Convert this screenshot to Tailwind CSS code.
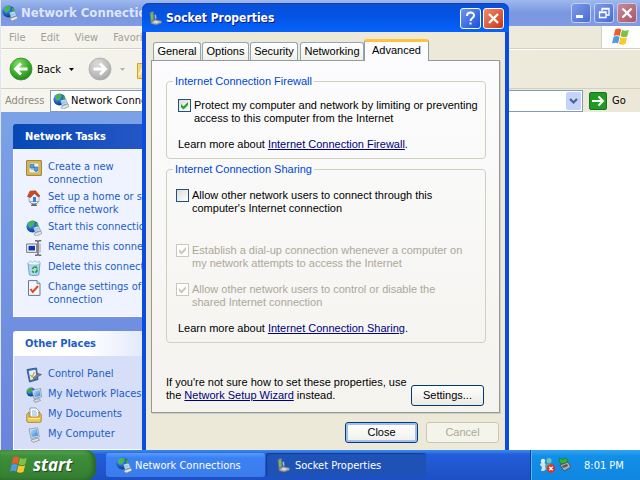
<!DOCTYPE html>
<html lang="en">
<head>
<meta charset="utf-8">
<title>Network Connections</title>
<script src="https://cdn.jsdelivr.net/npm/@tailwindcss/browser@4"></script>
</head>
<body class="h-screen overflow-hidden relative flex flex-col bg-white text-[11px] leading-[13px] text-black font-['DejaVu_Sans_Condensed','Liberation_Sans',sans-serif] cursor-default">

<svg class="absolute size-0" aria-hidden="true">
  <defs>
    <radialGradient id="gGlobe" cx=".35" cy=".3" r=".8"><stop offset="0" stop-color="#7cc4f5"/><stop offset=".5" stop-color="#1d63c8"/><stop offset="1" stop-color="#0b2c7c"/></radialGradient>
    <radialGradient id="gBack" cx=".4" cy=".3" r=".8"><stop offset="0" stop-color="#8fe06a"/><stop offset=".5" stop-color="#3fb22f"/><stop offset="1" stop-color="#1c7d1a"/></radialGradient>
    <radialGradient id="gFwd" cx=".4" cy=".3" r=".8"><stop offset="0" stop-color="#dcdcdc"/><stop offset=".6" stop-color="#bdbdbd"/><stop offset="1" stop-color="#a2a2a2"/></radialGradient>
    <linearGradient id="gScreen" x1="0" y1="0" x2="1" y2="1"><stop offset="0" stop-color="#b9e6fb"/><stop offset="1" stop-color="#2f7fdc"/></linearGradient>
  </defs>
  <symbol id="i-net" viewBox="0 0 16 16">
    <circle cx="6.500" cy="6.500" r="6" fill="url(#gGlobe)"/>
    <path d="M3 3 5.500 1 9 1.500 8 4 6 5 5 7.500 3 7z" fill="#45bb33"/><path d="M9.500 3.500l2-.5.8 3-1.800.5z" fill="#3fb02f"/>
    <path d="M7.500 7.500 12.500 6l2 4.500-5.500 2z" fill="#e8f3fb" stroke="#6a7f96" stroke-width=".7"/>
    <path d="m8.300 8.300 3.700-1.100 1.300 2.900-4 1.400z" fill="#8fd0f5"/>
    <path d="m9 13 6-2 1 2.500L10.500 16 8 14.800z" fill="#dfe3e6" stroke="#7b8288" stroke-width=".6"/>
  </symbol>
  <symbol id="i-socket" viewBox="0 0 16 16">
    <path d="M2 2.500 5.500 1.500 6 10 3 12z" fill="#8f9498" stroke="#6c7074" stroke-width=".7"/>
    <path d="M2.800 4.500 4.800 4l.2 4.500-1.800.5z" fill="#4fd83b"/>
    <path d="M6.500 5 8 4.500l.5 4L7 9z" fill="#b7bbbd"/>
    <path d="m3 12 4-2.500 6.500 1.500v2L8 15l-5-1.500z" fill="#a9adb0" stroke="#6c7074" stroke-width=".7"/>
    <path d="m5 12.200 2.500-1.400 4 .9-3 1.500z" fill="#dadcdd"/>
  </symbol>
  <symbol id="i-new" viewBox="0 0 16 16">
    <path d="M.7.700h14.600v14.600H.7z" fill="#e3c766" stroke="#94701b"/>
    <path d="M3 3h10v10H3z" fill="#f4efd8" stroke="#b08f32" stroke-width=".7"/>
    <path d="M4 4.500h4v3.500H4zM8 7h4v3.500H8z" fill="#4aa3e8" stroke="#2868b5" stroke-width=".6"/>
    <path d="M5 9h2M9 11.500h2.500" stroke="#6f8fa8"/>
  </symbol>
  <symbol id="i-home" viewBox="0 0 16 16">
    <path d="M3 6 8 3l5 3v5.500H3z" fill="#e6eef8" stroke="#8294ab" stroke-width=".7"/>
    <path d="M1.500 6.500 4 1.200 9.500.8 14 6l-2 .8L8.500 3.200 4.500 7.500z" fill="#d4481f" stroke="#98300f" stroke-width=".6"/>
    <path d="M7 7h3v5H7z" fill="#3382d6"/>
    <path d="M4 11.500c0 2.500 8 2.500 8 0l.5 1-2.500 1.800V15H6v-.8L3.500 12.500z" fill="#6f7a89"/>
    <path d="M5 15.300h6" stroke="#3f4752"/>
  </symbol>
  <symbol id="i-rename" viewBox="0 0 16 16">
    <path d="M.7 4h10v8.300H.7z" fill="#fff" stroke="#6d6d78"/>
    <path d="M2.500 5.800h6.500v4.700H2.500z" fill="#0b36ac"/>
    <path d="M9 .8h2l1 .8 1-.8h2.300M12 2v12M9 15.200h2l1-.9 1 .9h2.300" fill="none" stroke="#6a6a76" stroke-width="1.500"/>
    <path d="M14 3.500v9" stroke="#9a9aa4"/>
  </symbol>
  <symbol id="i-delete" viewBox="0 0 16 16">
    <path d="M2 3.500h12l-1.200 11.300c-2 1-7.500 1-9.500 0z" fill="#b4d8f2" stroke="#5b90bd" stroke-width=".8"/>
    <path d="m1.500 3.500 3-2.500 2 1.500L9 .8l2 1.500 2.500-.8.8 2-3 1.500H4z" fill="#eff8fe" stroke="#7badd2" stroke-width=".7"/>
    <path d="M6.500 9a2.500 2.500 0 0 1 4-1.500M11 9.500a2.500 2.500 0 0 1-2 2.800M8 12.500a2.500 2.500 0 0 1-1.700-1.700" fill="none" stroke="#1f9c2c" stroke-width="1.500"/>
    <path d="M10 5.800v2.700h2z" fill="#1f9c2c"/>
  </symbol>
  <symbol id="i-settings" viewBox="0 0 16 16">
    <path d="M2.500.6h8.500l3 3v11.800H2.500z" fill="#f2f6fd" stroke="#66788f"/>
    <path d="M11 .6v3h3" fill="#c3d2e8" stroke="#66788f" stroke-width=".8"/>
    <path d="m4.500 9 2.300 3L12 6" fill="none" stroke="#e8451c" stroke-width="2"/>
  </symbol>
  <symbol id="i-control" viewBox="0 0 16 16">
    <path d="M1 2.500 10.500 1l1.500 11.500L3.500 15z" fill="#3d78c8" stroke="#22497f" stroke-width=".8"/>
    <path d="m2.800 4 6.700-1.200 1 8.500-6 1.700z" fill="#e9f4fd"/>
    <path d="m4.500 8 1.700 2L8.500 5" fill="none" stroke="#d8a430" stroke-width="1.300"/>
    <path d="m7 11 5-4.500 3.500 1L12 9.500l-3.500 3z" fill="#7e8794" stroke="#3e4652" stroke-width=".6"/>
  </symbol>
  <symbol id="i-places" viewBox="0 0 16 16">
    <circle cx="5" cy="5" r="4.500" fill="url(#gGlobe)"/>
    <path d="m1.500 3 3-2 2 1-1 2-2 2.500-2-1z" fill="#3fb02f"/>
    <path d="m6 3.500 8.500-2L15.500 10 8 11.500z" fill="#e4ebf2" stroke="#73839a" stroke-width=".7"/>
    <path d="m7.200 4.500 6.500-1.500.8 6-5.800 1.200z" fill="url(#gScreen)"/>
    <path d="m7.500 13 5.500-1.500 1.500 2L9 15.500z" fill="#d4d9df" stroke="#737c88" stroke-width=".6"/>
  </symbol>
  <symbol id="i-docs" viewBox="0 0 16 16">
    <path d="M4 1h6l3 3v8H4z" fill="#fff" stroke="#6f86ad" stroke-width=".8"/>
    <path d="M6 4h4M6 6h5M6 8h5" stroke="#85b0e2"/>
    <path d="M.8 7.500 3 5v5h10V5l2.200 2.500V14c0 .8-.5 1.300-1.200 1.300H2c-.7 0-1.200-.5-1.200-1.300z" fill="#f0cb58" stroke="#a97f1c" stroke-width=".9"/>
    <path d="M2.500 11.500h11" stroke="#fff0b0"/>
  </symbol>
  <symbol id="i-computer" viewBox="0 0 16 16">
    <path d="M3 2 11.500.8l1.800 9L5 11.500z" fill="#dde6f0" stroke="#75859b" stroke-width=".7"/>
    <path d="m4.300 3 6.500-1 1.300 6.800-6.300 1.200z" fill="url(#gScreen)"/>
    <path d="m5 13 7-2 1.500 2.200-6.500 2.200z" fill="#e3e6ea" stroke="#7b8592" stroke-width=".7"/>
  </symbol>
  <symbol id="i-flag" viewBox="0 0 20 20">
    <path d="M4.200 2.500c2-1.300 3.700-1.300 6-.1L8.800 9C6.700 7.800 4.800 8 2.700 9z" fill="#f0592b"/>
    <path d="M11 2.800c2.300 1.300 4.300 1.200 6.800-.1L16.300 9.200c-2.300 1.300-4.500 1.300-6.700.1z" fill="#7dc242"/>
    <path d="M2.500 9.900c2.100-1.100 4-1.200 6.100 0l-1.500 6.600c-2.200-1.200-4-1-6.100.1z" fill="#4a9be8"/>
    <path d="M9.400 10.200c2.200 1.200 4.400 1.200 6.700 0l-1.600 6.500c-2.300 1.300-4.400 1.300-6.600.1z" fill="#fcc72b"/>
  </symbol>
</svg>

<!-- Explorer window -->
<main class="flex-1 min-h-0 flex flex-col border-l border-[#dfe6f6]">
  <header class="h-[26px] shrink-0 flex items-center gap-[3px] pl-px pr-[3px] bg-linear-to-b from-[#9db9ee] via-[#7a96df] to-[#809be2]">
    <svg class="size-4"><use href="#i-net"/></svg>
    <h1 class="flex-1 text-[13px] leading-4 font-bold text-[#dde6fa]">Network Connections</h1>
    <div class="flex gap-[3px]">
      <button aria-label="Minimize" class="size-5 rounded-[3px] border border-[#c3d0f3] bg-linear-to-br from-[#7b9bea] to-[#4a6bd2]"><svg viewBox="0 0 18 18" class="size-[18px]"><path d="M4 11h7v3H4z" fill="#fff"/></svg></button>
      <button aria-label="Restore" class="size-5 rounded-[3px] border border-[#c3d0f3] bg-linear-to-br from-[#7b9bea] to-[#4a6bd2]"><svg viewBox="0 0 18 18" class="size-[18px]"><path d="M7 7V4.500h7V11h-2.500M4.500 8h6.500v5.500H4.500zM4 8.500h7M7 5h7" fill="none" stroke="#fff" stroke-width="1.300"/></svg></button>
      <button aria-label="Close window" class="size-5 rounded-[3px] border border-[#d5c3dc] bg-linear-to-br from-[#c58a9c] to-[#a85768]"><svg viewBox="0 0 18 18" class="size-[18px]"><path d="m4.500 4.500 9 9m0-9-9 9" stroke="#fff" stroke-width="2.200"/></svg></button>
    </div>
  </header>

  <div class="h-[23px] shrink-0 flex border-b border-[#d4d0bd] bg-linear-to-r from-[#f6f5ef] to-[#ebe8d8]">
    <nav aria-label="Menu" class="flex-1 flex items-center gap-[15px] pl-2 text-[#a3a093]">
      <button>File</button><button>Edit</button><button>View</button><button>Favorites</button>
    </nav>
    <div class="w-[39px] flex items-center justify-center bg-white border-l border-[#d4d0bd]"><svg class="size-5"><use href="#i-flag"/></svg></div>
  </div>

  <div class="h-[40px] shrink-0 flex items-center pl-2 border-t border-b border-t-white border-b-[#d4d0bd] bg-linear-to-r from-[#f6f5ef] to-[#ebe8d8]">
    <button class="flex items-center gap-[4px]">
      <svg viewBox="0 0 24 24" class="size-6"><circle cx="12" cy="12" r="11" fill="url(#gBack)" stroke="#3a8a35" stroke-width=".8"/><path d="M18.500 12H7M12 6.500 6.500 12l5.500 5.500" fill="none" stroke="#fff" stroke-width="2.800"/></svg>
      Back
      <svg viewBox="0 0 5 3" class="w-[5px] h-[3px] ml-1"><path d="M0 0h5L2.500 3z"/></svg>
    </button>
    <button aria-label="Forward" class="flex items-center gap-2 ml-[14px]">
      <svg viewBox="0 0 24 24" class="size-6"><circle cx="12" cy="12" r="11" fill="url(#gFwd)" stroke="#aaa" stroke-width=".8"/><path d="M5.500 12H17M12 6.500l5.500 5.500-5.500 5.500" fill="none" stroke="#fff" stroke-width="2.800"/></svg>
      <svg viewBox="0 0 5 3" class="w-[5px] h-[3px]"><path d="M0 0h5L2.500 3z" fill="#b5b3a8"/></svg>
    </button>
    <svg viewBox="0 0 16 16" class="size-4 ml-3 mt-1"><path d="M.5.500h6l2 2h7v13H.5z" fill="#f7d972" stroke="#d6a124"/><path d="m2 12 4-7 4 7" fill="none" stroke="#fff6cf" stroke-width="2"/></svg>
  </div>

  <div class="h-[23px] shrink-0 flex items-center pl-[4px] bg-linear-to-r from-[#f6f5ef] to-[#ebe8d8]">
    <label for="addr" class="w-[45px] text-[#8d8b7f]">Address</label>
    <div class="flex-1 h-[22px] grid items-center bg-white border border-[#7f9db9]">
      <select id="addr" class="[grid-area:1/1] appearance-none w-full pl-5 bg-transparent outline-none"><option>Network Connections</option></select>
      <svg class="[grid-area:1/1] size-4 ml-[2px] pointer-events-none"><use href="#i-net"/></svg>
      <svg viewBox="0 0 15 18" class="[grid-area:1/1] justify-self-end w-[15px] h-[18px] mr-px rounded-[2px] bg-[#c3d3fb] pointer-events-none"><path d="m4 7 3.500 3.500L11 7" fill="none" stroke="#4d6185" stroke-width="2.200"/></svg>
    </div>
    <button class="w-[57px] flex items-center gap-[5px] pl-[6px]">
      <svg viewBox="0 0 18 18" class="size-[18px]"><rect x=".5" y=".5" width="17" height="17" rx="1.500" fill="#1f9a25" stroke="#17741b"/><path d="M3 9h11M9.500 4.500 14 9l-4.500 4.500" fill="none" stroke="#fff" stroke-width="2"/></svg>
      Go
    </button>
  </div>

  <div class="flex-1 min-h-0 flex bg-white">
    <aside class="w-[210px] pl-3 pr-3 pt-3 flex flex-col gap-[14px] bg-linear-to-b from-[#7ba2e7] to-[#6b84dc] text-[#215dc6]">
      <section>
        <h2 class="h-[25px] flex items-center pl-3 rounded-t-[3px] font-bold text-white bg-linear-to-r from-[#0549b4] to-[#2c5ccc]">Network Tasks</h2>
        <ul class="border border-t-0 border-white bg-[#eff3ff] pl-3 pt-[11px] pb-[10px] flex flex-col gap-1 whitespace-nowrap">
          <li><a href="#" class="flex gap-[6px]"><svg class="size-4 shrink-0"><use href="#i-new"/></svg><span>Create a new<br>connection</span></a></li>
          <li><a href="#" class="flex gap-[6px]"><svg class="size-4 shrink-0"><use href="#i-home"/></svg><span>Set up a home or small<br>office network</span></a></li>
          <li><a href="#" class="flex gap-[6px]"><svg class="size-4 shrink-0"><use href="#i-net"/></svg><span>Start this connection</span></a></li>
          <li><a href="#" class="flex gap-[6px]"><svg class="size-4 shrink-0"><use href="#i-rename"/></svg><span>Rename this connection</span></a></li>
          <li><a href="#" class="flex gap-[6px]"><svg class="size-4 shrink-0"><use href="#i-delete"/></svg><span>Delete this connection</span></a></li>
          <li><a href="#" class="flex gap-[6px]"><svg class="size-4 shrink-0"><use href="#i-settings"/></svg><span>Change settings of this<br>connection</span></a></li>
        </ul>
      </section>
      <section class="flex-1 flex flex-col">
        <h2 class="h-[25px] flex items-center pl-3 rounded-t-[3px] font-bold bg-linear-to-r from-white from-40% to-[#c6d3f7]">Other Places</h2>
        <ul class="flex-1 border border-t-0 border-white bg-[#d6dff7] pl-3 pt-[11px] flex flex-col gap-1 whitespace-nowrap">
          <li><a href="#" class="flex gap-[6px]"><svg class="size-4 shrink-0"><use href="#i-control"/></svg><span>Control Panel</span></a></li>
          <li><a href="#" class="flex gap-[6px]"><svg class="size-4 shrink-0"><use href="#i-places"/></svg><span>My Network Places</span></a></li>
          <li><a href="#" class="flex gap-[6px]"><svg class="size-4 shrink-0"><use href="#i-docs"/></svg><span>My Documents</span></a></li>
          <li><a href="#" class="flex gap-[6px]"><svg class="size-4 shrink-0"><use href="#i-computer"/></svg><span>My Computer</span></a></li>
        </ul>
      </section>
    </aside>
  </div>
</main>

<!-- Properties dialog -->
<div role="dialog" aria-labelledby="dlg" class="absolute left-[142px] top-[3px] w-[367px] rounded-t-[7px] border-x-4 border-[#0a4be0] bg-[#ece9d8] font-['Liberation_Sans',sans-serif]">
  <header class="h-[29px] -mx-1 pl-[6px] pr-[5px] flex items-center gap-[2px] rounded-t-[7px] bg-linear-to-b from-[#0a4fd8] via-[#0355e6] to-[#0663fb] border-t border-[#1941a5]">
    <svg class="size-4"><use href="#i-socket"/></svg>
    <h2 id="dlg" class="flex-1 text-[12px] leading-4 font-bold text-white font-['DejaVu_Sans_Condensed',sans-serif] text-shadow-[1px_1px_0_#0a1883]">Socket Properties</h2>
    <div class="flex gap-[2px]">
      <button aria-label="Help" class="size-[21px] rounded-[3px] border border-white bg-linear-to-br from-[#6a94f5] to-[#1f4fd3] grid place-items-center"><svg viewBox="0 0 19 19" class="size-[19px]"><path d="M6 7c0-4.500 7-4.500 7-.5 0 2.500-3.500 2.500-3.500 5.500" fill="none" stroke="#fff" stroke-width="2"/><path d="M8.500 13.500h2v2h-2z" fill="#fff"/></svg></button>
      <button aria-label="Close dialog" class="size-[21px] rounded-[3px] border border-white bg-linear-to-br from-[#f0896a] to-[#c8330b] grid place-items-center"><svg viewBox="0 0 19 19" class="size-[19px]"><path d="m5 5 9 9m0-9-9 9" stroke="#fff" stroke-width="2.300"/></svg></button>
    </div>
  </header>

  <div class="px-[5px] pt-[7px]">
    <div role="tablist" class="h-[21px] pl-[2px] flex items-end">
      <button role="tab" class="h-[18px] w-12 mr-px rounded-t-[3px] border border-b-0 border-[#91a7b4] bg-linear-to-b from-white to-[#f0f0ea]">General</button>
      <button role="tab" class="h-[18px] w-[47px] mr-px rounded-t-[3px] border border-b-0 border-[#91a7b4] bg-linear-to-b from-white to-[#f0f0ea]">Options</button>
      <button role="tab" class="h-[18px] w-12 mr-[2px] rounded-t-[3px] border border-b-0 border-[#91a7b4] bg-linear-to-b from-white to-[#f0f0ea]">Security</button>
      <button role="tab" class="h-[18px] w-16 rounded-t-[3px] border border-b-0 border-[#91a7b4] bg-linear-to-b from-white to-[#f0f0ea]">Networking</button>
      <button role="tab" aria-selected="true" class="relative z-10 h-[22px] w-[65px] -mb-px pb-[3px] rounded-t-[3px] border-x border-x-[#919b9c] border-t-[3px] border-t-[#ffc23c] bg-[#fcfcfe]">Advanced</button>
    </div>
    <div role="tabpanel" class="border border-[#919b9c] pl-[14px] pr-[13px] pb-[6px] pt-5 bg-linear-to-b from-[#fcfcfe] to-[#f4f3ee] shadow-[1px_1px_0_#d0cebf]">
      <section class="border border-[#d0d0bf] rounded-[4px] pl-[11px] pb-[7px] whitespace-nowrap">
        <h3 class="-mt-[7px] -ml-[5px] w-max px-[2px] bg-[#fbfbfc] text-[#0046d5]">Internet Connection Firewall</h3>
        <label class="mt-[11px] flex gap-[3px]">
          <span class="grid shrink-0 size-[13px]"><input type="checkbox" checked class="peer [grid-area:1/1] appearance-none size-[13px] border border-[#1c5180] bg-linear-to-br from-[#dcdcd7] to-white"><svg viewBox="0 0 13 13" class="[grid-area:1/1] size-[13px] pointer-events-none invisible peer-checked:visible"><path d="M3 5v3l2.500 2.500L10 6V3L5.500 7.500z" fill="#21a121"/></svg></span>
          <span>Protect my computer and network by limiting or preventing<br>access to this computer from the Internet</span>
        </label>
        <p class="mt-[13px]">Learn more about <a href="#" class="underline text-[#000080]">Internet Connection Firewall</a>.</p>
      </section>
      <section class="mt-[10px] border border-[#d0d0bf] rounded-[4px] pl-[9px] pb-[7px] whitespace-nowrap">
        <h3 class="-mt-[7px] -ml-[3px] w-max px-[2px] bg-[#f9f9f8] text-[#0046d5]">Internet Connection Sharing</h3>
        <label class="mt-[13px] flex gap-[3px]">
          <span class="grid shrink-0 size-[13px]"><input type="checkbox" class="appearance-none size-[13px] border border-[#1c5180] bg-linear-to-br from-[#dcdcd7] to-white"></span>
          <span>Allow other network users to connect through this<br>computer's Internet connection</span>
        </label>
        <label class="mt-[29px] flex gap-[3px] text-[#aca899]">
          <span class="grid shrink-0 size-[13px]"><input type="checkbox" checked disabled class="[grid-area:1/1] appearance-none size-[13px] border border-[#cac8bb] bg-white"><svg viewBox="0 0 13 13" class="[grid-area:1/1] size-[13px]"><path d="M3 5v3l2.500 2.500L10 6V3L5.500 7.500z" fill="#cac8bb"/></svg></span>
          <span>Establish a dial-up connection whenever a computer on<br>my network attempts to access the Internet</span>
        </label>
        <label class="mt-[13px] flex gap-[3px] text-[#aca899]">
          <span class="grid shrink-0 size-[13px]"><input type="checkbox" checked disabled class="[grid-area:1/1] appearance-none size-[13px] border border-[#cac8bb] bg-white"><svg viewBox="0 0 13 13" class="[grid-area:1/1] size-[13px]"><path d="M3 5v3l2.500 2.500L10 6V3L5.500 7.500z" fill="#cac8bb"/></svg></span>
          <span>Allow other network users to control or disable the<br>shared Internet connection</span>
        </label>
        <p class="mt-[13px] pl-[2px]">Learn more about <a href="#" class="underline text-[#000080]">Internet Connection Sharing</a>.</p>
      </section>
      <div class="mt-[33px] flex items-end justify-between pr-[2px]">
        <p class="pb-1">If you're not sure how to set these properties, use<br>the <a href="#" class="underline text-[#000080]">Network Setup Wizard</a> instead.</p>
        <button class="w-[73px] h-[21px] rounded-[3px] border border-[#003c74] bg-linear-to-b from-white to-[#ebeae3]">Settings...</button>
      </div>
    </div>
    <div class="flex justify-end gap-2 pt-[9px] pr-px pb-[10px]">
      <button class="w-[73px] h-[21px] rounded-[3px] border border-[#003c74] bg-linear-to-b from-white to-[#f0f0ea] shadow-[inset_0_0_0_2px_#a5bdf0]">Close</button>
      <button disabled class="w-[73px] h-[21px] rounded-[3px] border border-[#c9c7ba] bg-[#f5f4ea] text-[#aca899]">Cancel</button>
    </div>
  </div>
</div>

<!-- Taskbar -->
<footer class="relative z-20 h-[30px] shrink-0 flex items-stretch text-white bg-linear-to-b from-[#3c8cf0] via-[#245edb] via-15% to-[#1d4fc4]">
  <button class="w-24 flex items-center gap-1 pl-[9px] rounded-r-[10px] bg-linear-to-b from-[#5eac56] via-[#3c8f3b] via-20% to-[#357e33] shadow-[inset_-3px_0_4px_#276427] text-[17px] leading-5 font-bold italic font-['Open_Sans',sans-serif] text-shadow-[1px_1px_1px_#1d4a1c]">
    <svg class="size-5"><use href="#i-flag"/></svg>start
  </button>
  <div class="flex-1 flex gap-px pl-[10px] py-[3px]">
    <button class="w-[159px] flex items-center gap-[3px] pl-[10px] rounded-[3px] bg-linear-to-b from-[#5a9bfb] via-[#3c81f3] via-20% to-[#3a7cec]"><svg class="size-4"><use href="#i-net"/></svg>Network Connections</button>
    <button class="w-[160px] flex items-center gap-[3px] pl-[10px] rounded-[3px] bg-[#1e52b7] shadow-[inset_1px_1px_1px_#143c8c]"><svg class="size-4"><use href="#i-socket"/></svg>Socket Properties</button>
  </div>
  <div class="w-[110px] flex items-center pl-2 border-l border-[#0c3a9c] shadow-[inset_1px_0_0_#3dc0f8] bg-linear-to-b from-[#30a5f5] via-[#128fe8] via-20% to-[#1086e0]">
    <svg viewBox="0 0 18 16" class="w-[18px] h-4"><circle cx="4" cy="4" r="2.200" fill="#e4f2f8"/><path d="M1 8c0-3 6-3 6 0l1 3-3 3H2L3 10z" fill="#cfe4ec"/><circle cx="10" cy="3.500" r="2.600" fill="#6fc4b4"/><path d="M6 9c0-4 8-4 8 0v4H7z" fill="#4f9fb0"/><circle cx="12" cy="11.500" r="4.200" fill="#e0301e"/><path d="m10.300 9.800 3.400 3.400m0-3.400-3.400 3.400" stroke="#fff" stroke-width="1.400"/></svg>
    <svg viewBox="0 0 16 16" class="size-4 mr-[11px]"><path d="m2 1 4 1.500L9 1l2 4-3 2-2-.5L3 6z" fill="#35b52d" stroke="#17701a" stroke-width=".6"/><path d="m3 8 8-3 3 5-7 4z" fill="#a8adb0" stroke="#44484b" stroke-width=".8"/><path d="m5 9 5-2 1 2-5 2z" fill="#50565a"/></svg>
    <time>8:01 PM</time>
  </div>
</footer>
</body>
</html>
